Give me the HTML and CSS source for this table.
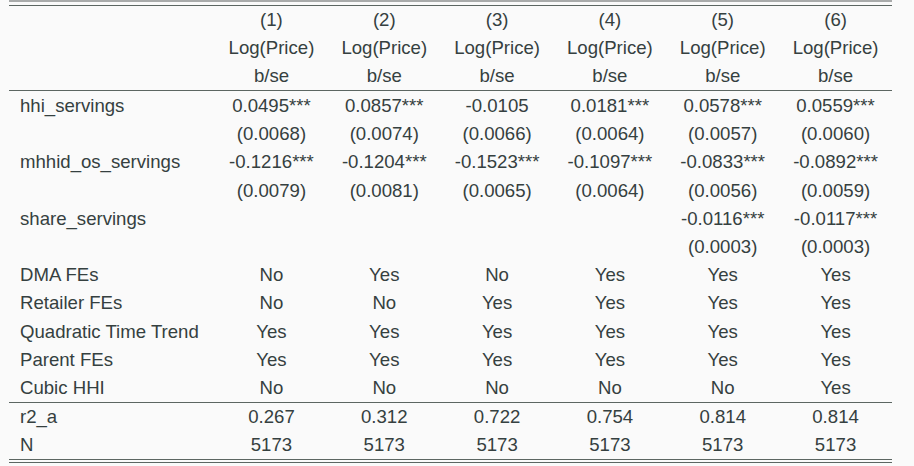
FILE: index.html
```html
<!DOCTYPE html>
<html>
<head>
<meta charset="utf-8">
<link rel="stylesheet" href="styles.css">
</head>
<body>
<div class="sheet">
  <div class="toprule"></div>
  <table class="reg">
    <colgroup>
      <col class="c-label">
      <col class="c-num"><col class="c-num"><col class="c-num">
      <col class="c-num"><col class="c-num"><col class="c-num">
    </colgroup>
    <thead>
      <tr><th></th><th>(1)</th><th>(2)</th><th>(3)</th><th>(4)</th><th>(5)</th><th>(6)</th></tr>
      <tr><th></th><th>Log(Price)</th><th>Log(Price)</th><th>Log(Price)</th><th>Log(Price)</th><th>Log(Price)</th><th>Log(Price)</th></tr>
      <tr><th></th><th>b/se</th><th>b/se</th><th>b/se</th><th>b/se</th><th>b/se</th><th>b/se</th></tr>
    </thead>
    <tbody class="coefs">
      <tr><td>hhi_servings</td><td>0.0495***</td><td>0.0857***</td><td>-0.0105</td><td>0.0181***</td><td>0.0578***</td><td>0.0559***</td></tr>
      <tr><td></td><td>(0.0068)</td><td>(0.0074)</td><td>(0.0066)</td><td>(0.0064)</td><td>(0.0057)</td><td>(0.0060)</td></tr>
      <tr><td>mhhid_os_servings</td><td>-0.1216***</td><td>-0.1204***</td><td>-0.1523***</td><td>-0.1097***</td><td>-0.0833***</td><td>-0.0892***</td></tr>
      <tr><td></td><td>(0.0079)</td><td>(0.0081)</td><td>(0.0065)</td><td>(0.0064)</td><td>(0.0056)</td><td>(0.0059)</td></tr>
      <tr><td>share_servings</td><td></td><td></td><td></td><td></td><td>-0.0116***</td><td>-0.0117***</td></tr>
      <tr><td></td><td></td><td></td><td></td><td></td><td>(0.0003)</td><td>(0.0003)</td></tr>
      <tr><td>DMA FEs</td><td>No</td><td>Yes</td><td>No</td><td>Yes</td><td>Yes</td><td>Yes</td></tr>
      <tr><td>Retailer FEs</td><td>No</td><td>No</td><td>Yes</td><td>Yes</td><td>Yes</td><td>Yes</td></tr>
      <tr><td>Quadratic Time Trend</td><td>Yes</td><td>Yes</td><td>Yes</td><td>Yes</td><td>Yes</td><td>Yes</td></tr>
      <tr><td>Parent FEs</td><td>Yes</td><td>Yes</td><td>Yes</td><td>Yes</td><td>Yes</td><td>Yes</td></tr>
      <tr><td>Cubic HHI</td><td>No</td><td>No</td><td>No</td><td>No</td><td>No</td><td>Yes</td></tr>
    </tbody>
    <tbody class="stats">
      <tr><td>r2_a</td><td>0.267</td><td>0.312</td><td>0.722</td><td>0.754</td><td>0.814</td><td>0.814</td></tr>
      <tr><td>N</td><td>5173</td><td>5173</td><td>5173</td><td>5173</td><td>5173</td><td>5173</td></tr>
    </tbody>
  </table>
  <div class="bottomrule"></div>
</div>
</body>
</html>
```
FILE: styles.css
```css
html, body {
  margin: 0;
  padding: 0;
  background: #fafafa;
}
body {
  font-family: "Liberation Sans", Arial, sans-serif;
  font-size: 18.6px;
  color: #354040;
}
.sheet {
  width: 883px;
  margin-left: 9px;
}
.toprule {
  height: 2px;
  background: #a9abab;
  margin-bottom: 3px;
}
.reg {
  width: 883px;
  border-collapse: collapse;
  table-layout: fixed;
  border-top: 1px solid #5c6662;
}
.c-label { width: 206px; }
.c-num { width: 112.8px; }
.reg th, .reg td {
  padding: 0;
  height: 28px;
  font-weight: normal;
  text-align: center;
  white-space: nowrap;
  line-height: 28px;
}
.reg td:first-child, .reg th:first-child {
  text-align: left;
  padding-left: 11px;
}
.reg thead tr:last-child th {
  border-bottom: 1px solid #5c6662;
}
.coefs td { height: 28.2px; }
.coefs tr:first-child td { padding-top: 1px; }
.stats tr:first-child td {
  border-top: 1px solid #5c6662;
}
.bottomrule {
  height: 2px;
  border-top: 1px solid #5c6662;
  border-bottom: 1px solid #5c6662;
}
```
